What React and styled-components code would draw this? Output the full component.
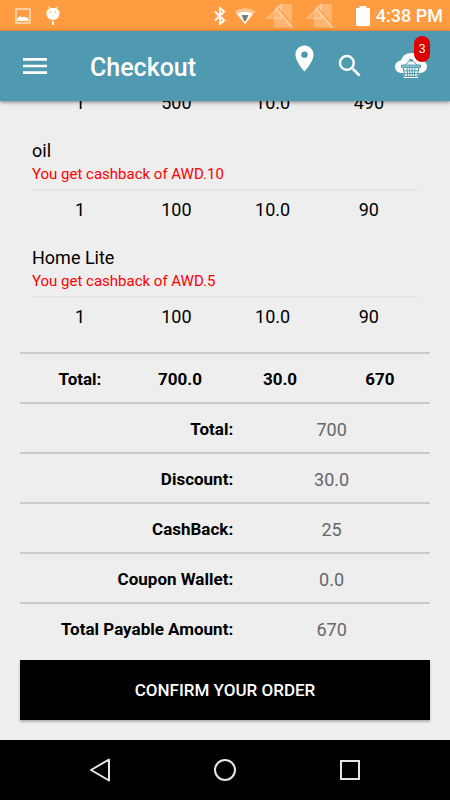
import React from 'react';
import styled, { createGlobalStyle } from 'styled-components';
import { MdMenu, MdPlace, MdSearch } from 'react-icons/md';

const items = [
    { id: 1, qty: '1', price: '500', discount: '10.0', total: '490' },
    { id: 2, name: 'oil', cashback: 10, qty: '1', price: '100', discount: '10.0', total: '90' },
    { id: 3, name: 'Home Lite', cashback: 5, qty: '1', price: '100', discount: '10.0', total: '90' },
];

const summary = [
    { label: 'Total:', value: '700' },
    { label: 'Discount:', value: '30.0' },
    { label: 'CashBack:', value: '25' },
    { label: 'Coupon Wallet:', value: '0.0' },
    { label: 'Total Payable Amount:', value: '670' },
];

const PictureIcon = () => (
    <svg width="16" height="16" viewBox="0 0 16 16">
        <rect x="1" y="1" width="14" height="14" fill="none" stroke="#fff" strokeOpacity="0.85" strokeWidth="1.2" />
        <path d="M2.5 13V10.2L5 8l2 1.6L9 8.6l1.4.9 1.3-.5 1.8 2V13z" fill="#fff" />
    </svg>
);

const DroidIcon = () => (
    <svg width="14" height="20" viewBox="0 0 14 20">
        <path d="M2.5.5 4 3M11.5.5 10 3" stroke="#fff" strokeWidth="1" />
        <path d="M.5 6.500C.8 3.500 3.500 2 7 2s6.200 1.500 6.500 4.500c.3 4-2.300 7.500-6.500 7.500S.2 10.500.5 6.500z" fill="#fff" />
        <circle cx="4.500" cy="6" r=".8" fill="#ff9b40" />
        <circle cx="9.500" cy="6" r=".8" fill="#ff9b40" />
        <path d="M7 15V19" stroke="#fff" strokeWidth="1.800" />
    </svg>
);

const BluetoothIcon = () => (
    <svg width="12" height="18" viewBox="0 0 12 18">
        <path d="m1 4.500 9.200 9L6 17V1l4.200 3.500L1 13.500" fill="none" stroke="#fff" strokeWidth="1.800" />
    </svg>
);

const WifiIcon = () => (
    <svg width="22" height="16" viewBox="0 0 22 16">
        <path d="M11 16 .5 3.500C6.500-.8 15.500-.8 21.500 3.500z" fill="#fff" fillOpacity=".4" />
        <path d="M11 16 3.200 6c4.500-3 11-3 15.600 0z" fill="#fff" />
        <path d="M7.500 7h7L12 13h-2z" fill="#8a8078" />
        <path d="M10.200 8.500h1.600L11 11.500z" fill="#5f5b58" />
    </svg>
);

const NoSimIcon = () => (
    <svg width="32" height="26" viewBox="0 0 32 26">
        <path d="M16 1h10.500Q28 1 28 2.500V23q0 1.500-1.500 1.500h-15Q10 24.500 10 23V7z" fill="#fff" fillOpacity=".27" />
        <path d="M1 16 18 0v16z" fill="#fff" fillOpacity=".27" />
        <path d="M6 14 16 4.800V14z" fill="#ff9b40" fillOpacity=".4" />
        <path d="m14 5.500 16 18" stroke="#ff9b40" strokeWidth="1.800" />
        <path d="m12 5 17 20" stroke="#fff" strokeOpacity=".3" strokeWidth="2" />
    </svg>
);

const BatteryIcon = () => (
    <svg width="14" height="21" viewBox="0 0 14 21">
        <path d="M3.500 1h7v2H13q1 0 1 1v16q0 1-1 1H1q-1 0-1-1V4q0-1 1-1h2.500z" fill="#fff" />
    </svg>
);

const BasketIcon = () => (
    <svg width="32" height="26" viewBox="0 0 32 26">
        <path d="M7 20C3 20 0 17.200 0 13.700c0-3.400 2.500-6 6-6.300C7.500 3 11 0 16 0c4.500 0 8.500 2.500 9.800 7.200C29.500 7.500 32 10 32 13.300c0 4-3 6.700-7 6.700z" fill="#fff" />
        <path d="M7.500 13h17L23 25H9z" fill="#fff" />
        <path d="M6.500 12h19v2.500h-19z" fill="#8cbdcb" stroke="#4f9ab0" strokeWidth=".9" />
        <path d="M8.300 15l1.500 8.500h12.400L23.700 15" fill="none" stroke="#4f9ab0" strokeWidth="1.200" />
        <path d="m10 12 5-4.800h2l5 4.800M9 17.800h14M9.500 20.600h13M12 15l.7 8.500M14.700 15l.2 8.500M17.300 15l-.2 8.500M20 15l-.7 8.500" fill="none" stroke="#4f9ab0" strokeWidth="1" />
        <rect x="14.200" y="6" width="3.600" height="2.400" rx="1" fill="#4f9ab0" />
    </svg>
);

const App = () => {
    return (
        <Screen>
            <GlobalStyle />
            <StatusBar>
                <Notifications>
                    <PictureIcon />
                    <DroidIcon />
                </Notifications>
                <SystemIcons>
                    <BluetoothIcon />
                    <WifiIcon />
                    <NoSimIcon />
                    <NoSimIcon />
                </SystemIcons>
                <BatteryIcon />
                <Clock>4:38 PM</Clock>
            </StatusBar>
            <Toolbar>
                <IconButton aria-label="Menu"><MdMenu size={32} /></IconButton>
                <Title>Checkout</Title>
                <Actions>
                    <IconButton aria-label="Location" $top><MdPlace size={31} /></IconButton>
                    <IconButton aria-label="Search"><MdSearch size={30} /></IconButton>
                    <CartButton aria-label="Cart">
                        <BasketIcon />
                        <Badge>3</Badge>
                    </CartButton>
                </Actions>
            </Toolbar>
            <Content>
                <ItemTable>
                    {items.map((item) => (
                        <tbody key={item.id}>
                            {item.name && (
                                <tr>
                                    <ItemHead colSpan={4} scope="rowgroup">
                                        <ItemName>{item.name}</ItemName>
                                        <Cashback>You get cashback of AWD.{item.cashback}</Cashback>
                                    </ItemHead>
                                </tr>
                            )}
                            <tr>
                                <ItemCell>{item.qty}</ItemCell>
                                <ItemCell>{item.price}</ItemCell>
                                <ItemCell>{item.discount}</ItemCell>
                                <ItemCell>{item.total}</ItemCell>
                            </tr>
                        </tbody>
                    ))}
                </ItemTable>
                <TotalsBox>
                    <Table>
                        <tbody>
                            <tr>
                                <TotalsCell as="th" scope="row">Total:</TotalsCell>
                                <TotalsCell>700.0</TotalsCell>
                                <TotalsCell>30.0</TotalsCell>
                                <TotalsCell>670</TotalsCell>
                            </tr>
                        </tbody>
                    </Table>
                </TotalsBox>
                <SummaryTable>
                    <tbody>
                        {summary.map((row) => (
                            <SummaryRow key={row.label}>
                                <SummaryLabel scope="row">{row.label}</SummaryLabel>
                                <SummaryValue>{row.value}</SummaryValue>
                            </SummaryRow>
                        ))}
                    </tbody>
                </SummaryTable>
                <ConfirmButton>CONFIRM YOUR ORDER</ConfirmButton>
            </Content>
            <NavBar>
                <IconButton aria-label="Back">
                    <svg width="24" height="24" viewBox="0 0 24 24">
                        <path d="M21 1.500v21L3 12z" fill="none" stroke="#e6e6e6" strokeWidth="2" strokeLinejoin="round" />
                    </svg>
                </IconButton>
                <IconButton aria-label="Home">
                    <svg width="24" height="24" viewBox="0 0 24 24">
                        <circle cx="12" cy="12" r="10" fill="none" stroke="#e6e6e6" strokeWidth="2" />
                    </svg>
                </IconButton>
                <IconButton aria-label="Recent apps">
                    <svg width="24" height="24" viewBox="0 0 24 24">
                        <rect x="3" y="3" width="18" height="18" fill="none" stroke="#e6e6e6" strokeWidth="2" />
                    </svg>
                </IconButton>
            </NavBar>
        </Screen>
    )
}

const GlobalStyle = createGlobalStyle`
    *{
        box-sizing: border-box;
    }
    body{
        margin: 0;
        font-family: Roboto, sans-serif;
        background: #eee;
    }
    svg{
        display: block;
        flex-shrink: 0;
    }
`;

const Screen = styled.div`
    height: 100vh;
    display: flex;
    flex-direction: column;
    background: #eee;
    color: #000;
`;

const StatusBar = styled.div`
    height: 31px;
    flex-shrink: 0;
    display: flex;
    align-items: center;
    padding: 0 7px 0 15px;
    background: #ff9b40;
    color: #fff;
`;

const Notifications = styled.div`
    display: flex;
    align-items: center;
    gap: 15px;
    margin-right: auto;
`;

const SystemIcons = styled.div`
    display: flex;
    align-items: center;
    gap: 8px;
    margin-right: 20px;
`;

const Clock = styled.span`
    margin-left: 6px;
    font-size: 18px;
    font-weight: 500;
`;

const Toolbar = styled.header`
    height: 70px;
    flex-shrink: 0;
    display: flex;
    align-items: center;
    padding: 0 23px 0 19px;
    background: #4f9ab0;
    color: #fff;
    box-shadow: 0 1px 4px rgba(0, 0, 0, 0.5);
    z-index: 1;
`;

const Title = styled.h1`
    margin: 2px 0 0 39px;
    font-size: 25px;
    font-weight: 500;
`;

const Actions = styled.div`
    align-self: stretch;
    display: flex;
    align-items: center;
    gap: 15px;
    margin-left: auto;
`;

const IconButton = styled.button`
    padding: 0;
    border: 0;
    background: none;
    color: inherit;
    align-self: ${(props) => (props.$top ? 'flex-start' : 'auto')};
    margin-top: ${(props) => (props.$top ? '12px' : '0')};
`;

const CartButton = styled(IconButton)`
    position: relative;
    margin-left: 15px;
`;

const Badge = styled.span`
    position: absolute;
    top: -17px;
    right: -3px;
    width: 16px;
    line-height: 26px;
    border-radius: 8px;
    background: #dc0000;
    font-size: 12px;
    text-align: center;
`;

const Content = styled.main`
    flex: 1;
    min-height: 0;
    overflow: hidden;
    display: flex;
    flex-direction: column;
    justify-content: flex-end;
    padding: 0 20px 20px;
    font-size: 17px;
`;

const Table = styled.table`
    flex-shrink: 0;
    table-layout: fixed;
    border-collapse: separate;
    border-spacing: 0;
    width: 100%;

    th, td{
        padding: 0;
    }
`;

const ItemTable = styled(Table)`
    width: auto;
    margin: 0 13px 18px 12px;
    font-size: 18px;
`;

const ItemHead = styled.th`
    height: 71px;
    border-bottom: 2px solid #e4e4e4;
    font-weight: 400;
    text-align: left;
    vertical-align: bottom;
`;

const ItemName = styled.div`
    line-height: 22px;
`;

const Cashback = styled.div`
    padding-bottom: 3px;
    font-size: 15px;
    line-height: 24px;
    color: #f00;
`;

const ItemCell = styled.td`
    width: 25%;
    height: 36px;
    text-align: center;
`;

const TotalsBox = styled.div`
    flex-shrink: 0;
    padding-left: 10px;
    border-top: 2px solid #cacaca;
`;

const TotalsCell = styled.td`
    height: 48px;
    font-weight: 700;
    text-align: center;

    &&{
        padding-top: 2px;
    }
`;

const SummaryTable = styled(Table)`
    margin-bottom: 8px;
`;

const SummaryRow = styled.tr`
    &&& th, &&& td{
        height: 50px;
        padding-top: 2px;
        border-top: 2px solid #cacaca;
    }
`;

const SummaryLabel = styled.th`
    width: 52%;
    font-weight: 700;
    text-align: right;
`;

const SummaryValue = styled.td`
    font-size: 18px;
    color: #666;
    text-align: center;
`;

const ConfirmButton = styled.button`
    flex-shrink: 0;
    height: 60px;
    border: 0;
    background: #000;
    color: #fff;
    font-family: inherit;
    font-size: 17px;
    font-weight: 500;
    box-shadow: 0 2px 2px rgba(0, 0, 0, 0.25);
`;

const NavBar = styled.nav`
    height: 60px;
    flex-shrink: 0;
    display: flex;
    align-items: center;
    justify-content: center;
    gap: 101px;
    background: #000;
`;

export default App
